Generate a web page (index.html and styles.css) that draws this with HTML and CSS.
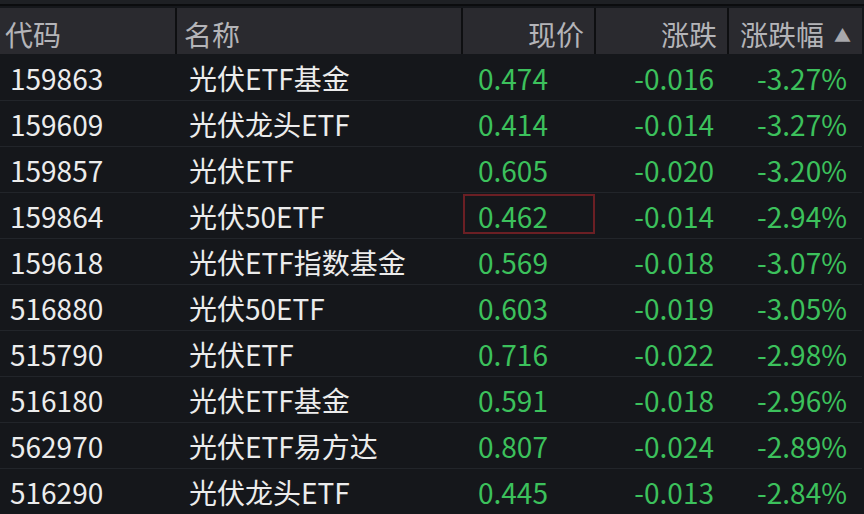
FILE: index.html
```html
<!DOCTYPE html>
<html lang="zh-CN">
<head>
  <meta charset="UTF-8" />
  <title>光伏ETF</title>
  <link rel="stylesheet" href="styles.css">
</head>
<body>
  <div class="topbar"></div>
  <table class="quotes">
    <thead>
      <tr>
        <th class="code">代码</th>
        <th class="name">名称</th>
        <th class="price">现价</th>
        <th class="chg">涨跌</th>
        <th class="pct">涨跌幅<span class="sort">▲</span></th>
      </tr>
    </thead>
    <tbody>
      <tr><td class="code">159863</td><td class="name">光伏ETF基金</td><td class="price">0.474</td><td class="chg">-0.016</td><td class="pct">-3.27%</td></tr>
      <tr><td class="code">159609</td><td class="name">光伏龙头ETF</td><td class="price">0.414</td><td class="chg">-0.014</td><td class="pct">-3.27%</td></tr>
      <tr><td class="code">159857</td><td class="name">光伏ETF</td><td class="price">0.605</td><td class="chg">-0.020</td><td class="pct">-3.20%</td></tr>
      <tr><td class="code">159864</td><td class="name">光伏50ETF</td><td class="price selected"><span>0.462</span></td><td class="chg">-0.014</td><td class="pct">-2.94%</td></tr>
      <tr><td class="code">159618</td><td class="name">光伏ETF指数基金</td><td class="price">0.569</td><td class="chg">-0.018</td><td class="pct">-3.07%</td></tr>
      <tr><td class="code">516880</td><td class="name">光伏50ETF</td><td class="price">0.603</td><td class="chg">-0.019</td><td class="pct">-3.05%</td></tr>
      <tr><td class="code">515790</td><td class="name">光伏ETF</td><td class="price">0.716</td><td class="chg">-0.022</td><td class="pct">-2.98%</td></tr>
      <tr><td class="code">516180</td><td class="name">光伏ETF基金</td><td class="price">0.591</td><td class="chg">-0.018</td><td class="pct">-2.96%</td></tr>
      <tr><td class="code">562970</td><td class="name">光伏ETF易方达</td><td class="price">0.807</td><td class="chg">-0.024</td><td class="pct">-2.89%</td></tr>
      <tr><td class="code">516290</td><td class="name">光伏龙头ETF</td><td class="price">0.445</td><td class="chg">-0.013</td><td class="pct">-2.84%</td></tr>
    </tbody>
  </table>
</body>
</html>
```

FILE: styles.css
```css
* {
  margin: 0;
  padding: 0;
  box-sizing: border-box;
}

body {
  background: #15171b;
  font-family: "Noto Sans CJK SC", "Noto Sans", sans-serif;
  overflow: hidden;
  width: 864px;
  height: 514px;
}

.topbar {
  height: 6px;
  background: #1e2024;
  border-bottom: 2px solid #0b0c0e;
  margin-bottom: 2px;
}

.quotes {
  border-collapse: collapse;
  table-layout: fixed;
  width: 862px;
}

.quotes th {
  height: 46px;
  background: #2a2a2f;
  color: #b4b4b8;
  font-weight: normal;
  font-size: 28px;
  text-align: right;
  padding: 5px 10px 0 0;
  border-left: 2px solid #0e0f11;
  white-space: nowrap;
}

.quotes th:first-child {
  border-left: none;
}

.quotes th.code,
.quotes th.name {
  text-align: left;
  padding-left: 5px;
}

.quotes th.name {
  padding-left: 7px;
}

.quotes th.pct {
  text-align: left;
  padding-left: 11px;
}

.sort {
  font-size: 17px;
  color: #a8a8ac;
  margin-left: 10px;
  vertical-align: 4px;
}

.quotes td {
  height: 46px;
  font-size: 28px;
  color: #3cc15c;
  border-bottom: 1px solid #22252a;
  white-space: nowrap;
  padding: 2px 0 0 0;
}

.quotes td.code,
.quotes td.name {
  color: #ececec;
}

.code { width: 176px; }
.name { width: 286px; }
.price { width: 133px; }
.chg { width: 133px; }
.pct { width: 134px; }

td.code { padding-left: 10px; }
td.name { padding-left: 13px; }
td.price { padding-left: 16px; }

td.chg {
  text-align: right;
  padding-right: 14px;
}

td.pct {
  text-align: right;
  padding-right: 15px;
}

td.selected {
  position: relative;
}

td.selected::after {
  content: "";
  position: absolute;
  left: 1px;
  top: 1px;
  right: 0;
  bottom: 4px;
  border: 2px solid #6b1f24;
}
```
